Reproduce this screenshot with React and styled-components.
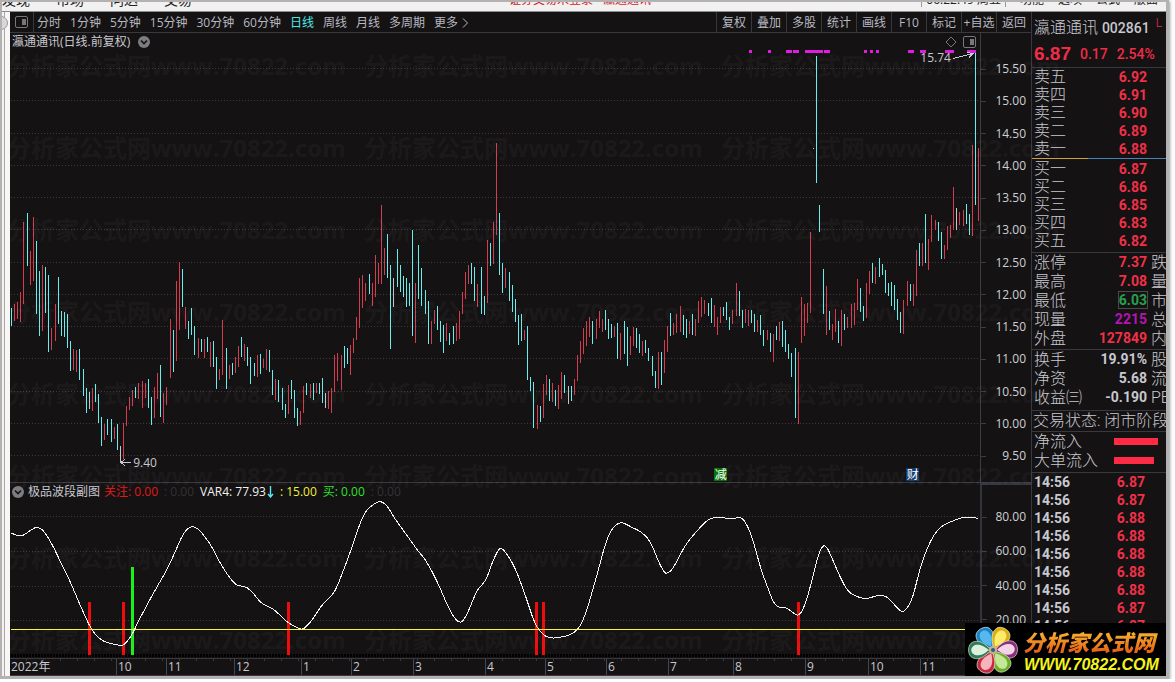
import styled, { createGlobalStyle } from "styled-components";

const periods = ["分时", "1分钟", "5分钟", "15分钟", "30分钟", "60分钟", "日线", "周线", "月线", "多周期"];
const tools = ["复权", "叠加", "多股", "统计", "画线", "F10", "标记", "+自选", "返回"];

const prices = ["15.50", "15.00", "14.50", "14.00", "13.50", "13.00", "12.50", "12.00", "11.50", "11.00", "10.50", "10.00", "9.50"];
const levels = ["80.00", "60.00", "40.00", "20.00"];

const months = [
  ["2022年", 106], ["10", 50], ["11", 68], ["12", 67], ["1", 50], ["2", 62], ["3", 72], ["4", 60],
  ["5", 61], ["6", 62], ["7", 65], ["8", 72], ["9", 63], ["10", 52], ["11", 111]
];

const asks = [["卖五", "6.92"], ["卖四", "6.91"], ["卖三", "6.90"], ["卖二", "6.89"], ["卖一", "6.88"]];
const bids = [["买一", "6.87"], ["买二", "6.86"], ["买三", "6.85"], ["买四", "6.83"], ["买五", "6.82"]];
const limits = [
  ["涨停", "7.37", "跌", "up"],
  ["最高", "7.08", "量", "up"],
  ["最低", "6.03", "市", "down"],
  ["现量", "2215", "总", "volume"],
  ["外盘", "127849", "内", "up"]
];
const basics = [
  ["换手", "19.91%", "股", "plain"],
  ["净资", "5.68", "流", "plain"],
  ["收益㈢", "-0.190", "PE", "plain"]
];
const deals = ["6.87", "6.87", "6.88", "6.88", "6.88", "6.88", "6.88", "6.87", "6.87"];

// direction (u = up, d = down, w = flat), high, low
const bars = `
d308-326 u304-321 u302-319 u292-322 u222-304 d213-266 u251-285 u217-281 d241-314 d271-336
u265-331 d267-313 d275-352 u328-350 u304-341 d277-324 d311-336 d312-337 d314-348 d341-371
u349-370 u350-372 d349-380 d369-396 d388-413 w392-409 u388-411 d384-402 d394-423 d417-446
u424-440 d419-435 d419-442 u427-439 d424-450 w446-463 u423-459 u406-426 u397-410 u390-406
d387-398 u383-399 u381-408 u383-398 d379-408 d397-425 u387-418 u373-399 d365-417 u393-423
u387-405 u319-378 d330-372 u281-361 u262-330 d269-307 u307-329 d321-339 d308-335 d326-355
u338-358 d339-352 u339-358 d337-352 u342-367 d341-367 d357-389 u369-380 u320-375 d348-389
u365-379 d363-375 u357-373 u346-367 d337-357 u344-361 d347-366 d357-384 d363-376 u355-377
d354-374 u359-368 u349-370 d350-372 d370-395 u379-400 d380-402 d388-410 d404-418 u385-414
d380-399 d390-418 d408-426 u411-425 u386-413 d383-395 u384-398 d383-400 u383-393 d383-394
d378-403 w393-408 u391-409 u388-413 u355-392 u353-381 u355-390 d346-368 d348-364 u345-375
u338-353 u317-340 u278-328 u275-308 u283-301 d274-294 u283-306 u255-297 u263-284 u205-284
u248-275 d234-278 d265-349 w278-307 d249-287 d265-292 d276-297 d278-307 d283-306 d230-336
u283-343 d245-299 d268-306 d290-314 d301-344 u321-344 u310-324 d306-330 d321-342 d325-353
u323-341 d333-345 d326-344 u323-341 u311-339 u292-314 u272-299 u265-284 d263-284 d267-301
u284-307 d267-314 d296-315 u240-303 d243-266 u222-264 u143-235 d213-275 d263-293 u268-288
d272-301 d285-312 d299-322 d315-345 d314-341 u330-340 d326-380 d377-391 d382-428 u405-429
d406-422 u384-418 u375-395 d379-401 u383-402 d390-406 u385-409 u372-399 d375-393 w386-404
d386-401 u379-395 u355-381 u341-363 u328-354 u321-346 u317-337 d321-344 u319-339 u311-328
u319-332 d310-330 d319-339 d324-338 u326-337 d323-359 u333-360 d321-354 d327-366 u336-355
u327-346 d328-348 d334-353 u341-356 d340-353 d348-361 d356-376 d371-388 u352-389 d352-385
u340-373 u326-352 d313-336 u323-335 u314-333 u306-332 d315-335 d319-338 u321-334 d314-335
u319-336 u301-323 u297-317 u300-314 d303-316 d298-323 u305-327 u317-335 u307-323 d307-316
d302-320 d317-330 u310-324 u283-316 d291-316 d310-328 u309-323 u310-326 d310-323 d314-332
u320-332 d315-335 d330-346 u330-340 d333-352 u334-362 d326-340 u322-341 d321-347 d330-352
d344-359 d353-377 d348-418 u352-424 u297-343 u304-336 u303-323 u232-313 w148-149 d56-183
d205-232 d269-314 u286-335 d311-330 u324-340 u309-332 d321-343 u310-346 d314-330 u317-328
u304-328 u303-325 u279-310 d288-312 d306-321 u283-318 u271-294 d263-283 u267-284 d258-277
d264-275 d270-293 d283-296 d282-306 d285-310 d299-320 d312-333 u300-334 u281-306 d284-301
u284-306 u250-296 d243-266 u243-266 d214-263 u239-270 u215-242 u220-230 d222-241 d232-259
u245-259 u226-250 u225-238 u187-230 w208-230 u212-225 u210-226 d204-224 d214-235 u145-236
d53-205 u148-221
`.trim().split(/\s+/).map((item, i) => {
  const [high, low] = item.slice(1).split("-").map(Number);
  return { x: Math.floor(11.5 + i * 3.1095), high, low, dir: item[0] };
});

const barColors = { u: "#d63c50", d: "#68eeec", w: "#c4c4cc" };

const signals = [
  [749, 3], [768, 3], [786, 6], [793, 6], [805, 18], [824, 6], [864, 3], [870, 3], [876, 3],
  [908, 6], [920, 6], [945, 9], [967, 9]
];

const wave = [
  [11, 533], [20, 537], [27, 533], [35, 527], [41, 528], [46, 534], [53, 546], [62, 565], [70, 581],
  [80, 605], [90, 627], [95, 634], [100, 639], [107, 643], [114, 644], [122, 646], [127, 642],
  [133, 633], [137, 624], [148, 603], [158, 585], [168, 568], [175, 552], [182, 536], [187, 529],
  [192, 526], [199, 529], [204, 536], [211, 545], [220, 563], [229, 577], [236, 585], [241, 586],
  [247, 587], [254, 594], [260, 602], [266, 606], [272, 608], [280, 615], [288, 623], [296, 627],
  [302, 630], [307, 626], [313, 619], [321, 606], [328, 599], [335, 592], [344, 569], [351, 550],
  [359, 526], [365, 512], [371, 506], [379, 501], [384, 503], [388, 507], [395, 519], [403, 530],
  [411, 541], [418, 551], [425, 559], [433, 573], [441, 590], [448, 607], [455, 619], [460, 623],
  [464, 620], [469, 610], [477, 590], [482, 585], [487, 578], [492, 563], [498, 550], [501, 548],
  [505, 551], [515, 567], [526, 597], [534, 622], [541, 633], [548, 638], [559, 638], [576, 633],
  [585, 617], [597, 575], [606, 541], [613, 527], [620, 522], [626, 524], [633, 528], [640, 531],
  [650, 540], [659, 563], [664, 572], [667, 574], [673, 569], [682, 551], [689, 540], [704, 523],
  [711, 518], [718, 517], [732, 519], [740, 517], [745, 521], [752, 536], [761, 570], [768, 588],
  [773, 602], [779, 608], [785, 607], [790, 610], [798, 617], [804, 608], [811, 585], [818, 555],
  [823, 545], [827, 547], [832, 558], [840, 577], [848, 592], [857, 597], [867, 599], [875, 596],
  [882, 595], [889, 598], [897, 608], [902, 612], [906, 610], [913, 598], [920, 567], [931, 539],
  [940, 527], [950, 522], [960, 518], [966, 517], [970, 518], [974, 517], [978, 519]
];

const smooth = (points) => {
  let d = `M${points[0].join(" ")}`;
  for (let i = 1; i < points.length - 1; i++) {
    const [x, y] = points[i];
    const [nx, ny] = points[i + 1];
    d += ` Q${x} ${y} ${(x + nx) / 2} ${(y + ny) / 2}`;
  }
  return `${d} L${points[points.length - 1].join(" ")}`;
};

const Collapse = () => (
  <svg width="12" height="12" viewBox="0 0 12 12">
    <circle cx="6" cy="6" r="6" fill="#7d7d80" />
    <path d="M3 4.5 6 7.5 9 4.5" fill="none" stroke="#141213" strokeWidth="1.6" />
  </svg>
);

const SplitIcon = () => (
  <svg width="13" height="12" viewBox="0 0 13 12">
    <rect x=".5" y=".5" width="12" height="11" rx="1.5" fill="none" stroke="#77777a" />
    <rect x="7" y="3" width="4" height="6" fill="#77777a" />
  </svg>
);

const PriceChart = () => (
  <Plot viewBox="10 50 970 432" preserveAspectRatio="none" shapeRendering="crispEdges">
    {prices.map((price, i) => (
      <line
        key={price}
        x1="11" x2="980"
        y1={Math.round(68 + i * 32.25) + 0.5} y2={Math.round(68 + i * 32.25) + 0.5}
        stroke="#3b3a3c" strokeDasharray="1 2"
      />
    ))}
    {bars.map(({ x, high, low, dir }) => (
      <rect key={x} x={x} y={high} width="1" height={low - high} fill={barColors[dir]} />
    ))}
    {signals.map(([x, width]) => (
      <rect key={x} x={x} y="50" width={width} height="3" fill="#e01ce0" />
    ))}
    <path
      d="M953 58.5 973 53.5M967 52.5 973 53.5 969 57.5M131 462.5H120M125 459.5 121 462.5 125 465.5"
      fill="none" stroke="#c8c8d0"
    />
  </Plot>
);

const WaveChart = () => (
  <Plot viewBox="10 500 970 158" preserveAspectRatio="none" shapeRendering="crispEdges">
    {[516, 551, 586, 620].map((y) => (
      <line key={y} x1="11" x2="980" y1={y + 0.5} y2={y + 0.5} stroke="#3b3a3c" strokeDasharray="1 2" />
    ))}
    <line x1="11" x2="980" y1="655.5" y2="655.5" stroke="#000" strokeWidth="3" strokeDasharray="2 1" />
    {[88, 122, 287, 535, 542, 797].map((x) => (
      <rect key={x} x={x} y="602" width="3" height="53" fill="#ee0c0c" />
    ))}
    <rect x="131" y="567" width="3" height="88" fill="#1cf01c" />
    <path d={smooth(wave)} fill="none" stroke="#f4f4f4" />
    <line x1="11" x2="980" y1="629.5" y2="629.5" stroke="#f4f43c" />
  </Plot>
);

const Petal = ({ angle, outer, inner }) => (
  <g transform={`rotate(${angle} 28 27)`}>
    <path d="M28 25C20 18 18 12 20 7 22 1 34 1 36 7 38 12 36 18 28 25Z" fill={outer} stroke="#f4f0d8" strokeWidth=".6" />
    <path d="M28 23C23 17 22 13 23 9 25 4 31 4 33 9 34 13 33 17 28 23Z" fill={inner} />
  </g>
);

const QuoteRows = ({ rows }) => (
  <Quotes>
    <tbody>
      {rows.map(([label, value, side, tone = "up"]) => (
        <QuoteRow key={label} $tall={Boolean(side)}>
          <th scope="row">{label}</th>
          <Value $tone={tone}><span>{value}</span></Value>
          <Side>{side}</Side>
        </QuoteRow>
      ))}
    </tbody>
  </Quotes>
);

const SiteLogo = () => (
  <Logo>
    <svg width="56" height="53" viewBox="0 0 56 53">
      <Petal angle={-30} outer="#1684c8" inner="#58b8ee" />
      <Petal angle={30} outer="#dcae10" inner="#fbec6c" />
      <Petal angle={88} outer="#8b2b84" inner="#f3d4e4" />
      <Petal angle={146} outer="#6cae2c" inner="#c4e898" />
      <Petal angle={206} outer="#c82840" inner="#f6b4bc" />
      <Petal angle={270} outer="#2f7c5c" inner="#dcf0dc" />
      <circle cx="28" cy="27" r="4" fill="#c8b088" />
      <circle cx="28" cy="27" r="2" fill="#2c5c84" />
    </svg>
    <div>
      <LogoName>分析家公式网</LogoName>
      <LogoSite>WWW.70822.COM</LogoSite>
    </div>
  </Logo>
);

export default function App() {
  return (
    <Window>
      <GlobalStyle />
      <MenuBar>
        <MenuGroup>
          <a href="#discover">发现</a>
          <a href="#market">市场</a>
          <a href="#ask">问达</a>
          <a href="#trade">交易</a>
        </MenuGroup>
        <Notice><span>证券交易未登录</span><span>瀛通通讯</span></Notice>
        <MenuRight>
          <Clock>06:22:49 周五</Clock>
          <a href="#features">功能</a>
          <a href="#options">选项</a>
          <a href="#formula">公式</a>
          <a href="#layout">版面</a>
        </MenuRight>
      </MenuBar>
      <Body>
        <Dock><button aria-label="展开" /></Dock>
        <Main>
          <Toolbar>
            <IconButton aria-label="分栏"><SplitIcon /></IconButton>
            <Periods>
              {periods.map((name) => (
                <Period key={name} $active={name === "日线"}>{name}</Period>
              ))}
              <Period>
                更多
                <svg width="7" height="10" viewBox="0 0 7 10">
                  <path d="M1 .5 5.5 5 1 9.5" fill="none" stroke="#b8b8c0" />
                </svg>
              </Period>
            </Periods>
            <Tools>
              {tools.map((name) => <Tool key={name}>{name}</Tool>)}
            </Tools>
          </Toolbar>
          <Pane $grow>
            <PlotColumn>
              <ChartTitle>
                瀛通通讯(日线.前复权)
                <Collapse />
                <TitleIcons>
                  <svg width="12" height="12" viewBox="0 0 12 12">
                    <path d="M6 1 11 6 6 11 1 6Z" fill="none" stroke="#77777a" />
                  </svg>
                  <SplitIcon />
                </TitleIcons>
              </ChartTitle>
              <PlotBox>
                <PriceChart />
                <HighLabel>15.74</HighLabel>
                <LowLabel>9.40</LowLabel>
                <EventTag $left="72.6%" $color="#087408">减</EventTag>
                <EventTag $left="92.4%" $color="#103c6c">财</EventTag>
              </PlotBox>
            </PlotColumn>
            <PriceScale>
              {prices.map((price) => <span key={price}>{price}</span>)}
            </PriceScale>
          </Pane>
          <Pane>
            <PlotColumn>
              <WaveTitle>
                <Collapse />
                <span>极品波段副图</span>
                <Reading $color="#e01818">关注: 0.00</Reading>
                <Reading $color="#333234">: 0.00</Reading>
                <Reading $color="#f0f0f0">
                  VAR4: 77.93
                  <svg width="7" height="12" viewBox="0 0 7 12">
                    <path d="M3.5 0V11M1 8 3.5 11 6 8" fill="none" stroke="#5ce8f0" strokeWidth="1.4" />
                  </svg>
                </Reading>
                <Reading $color="#f0f03c">: 15.00</Reading>
                <Reading $color="#30e030">买: 0.00</Reading>
                <Reading $color="#333234">: 0.00</Reading>
              </WaveTitle>
              <PlotBox><WaveChart /></PlotBox>
            </PlotColumn>
            <LevelScale>
              {levels.map((level) => <span key={level}>{level}</span>)}
            </LevelScale>
          </Pane>
          <TimeAxis>
            {months.map(([name], i) => <span key={i}>{name}</span>)}
          </TimeAxis>
        </Main>
        <Aside>
          <StockHead>
            <StockName>瀛通通讯 <b>002861</b><sup>L</sup></StockName>
            <StockPrice><strong>6.87</strong><span>0.17</span><span>2.54%</span></StockPrice>
          </StockHead>
          <QuoteRows rows={asks} />
          <Balance />
          <QuoteRows rows={bids} />
          <Rule $gap="2px" />
          <QuoteRows rows={limits} />
          <Rule $gap="1px" />
          <QuoteRows rows={basics} />
          <Rule $gap="3px" />
          <Status>交易状态: 闭市阶段</Status>
          <Rule $gap="1px" />
          <Flow><span>净流入</span><FlowBar $width="44px" /></Flow>
          <Flow><span>大单流入</span><FlowBar $width="40px" /></Flow>
          <Rule $gap="2px" />
          <Deals>
            <table>
              <tbody>
                {deals.map((price, i) => (
                  <tr key={i}><td>14:56</td><td>{price}</td></tr>
                ))}
              </tbody>
            </table>
          </Deals>
        </Aside>
        <Watermark aria-hidden="true">
          {Array.from({ length: 24 }, (_, i) => (
            <span key={i}>分析家公式网www.70822.com</span>
          ))}
        </Watermark>
        <SiteLogo />
      </Body>
    </Window>
  );
}

const GlobalStyle = createGlobalStyle`
  * {
    box-sizing: border-box;
  }
  body {
    margin: 0;
    background: #fff;
    color: #c8c8d0;
    font-family: "Open Sans", "Noto Sans CJK SC", sans-serif;
    font-size: 12px;
    line-height: 16px;
  }
  button {
    padding: 0;
    border: 0;
    background: none;
    color: inherit;
    font: inherit;
    cursor: pointer;
  }
  a {
    color: inherit;
    text-decoration: none;
  }
  svg {
    display: block;
    flex: none;
  }
`

const Window = styled.div`
  display: flex;
  flex-direction: column;
  min-height: calc(100vh - 3px);
  margin-right: 6px;
  border: solid #b4b1b2;
  border-width: 2px 3px 3px 2px;
  box-shadow: 1px 1px 3px #999;
`

const MenuBar = styled.div`
  display: flex;
  justify-content: space-between;
  align-items: flex-end;
  height: 10px;
  padding-bottom: 4px;
  overflow: hidden;
  background: #f1f1f1;
  border-bottom: 1px solid #8c8c8c;
  color: #222;
  line-height: 14px;
  white-space: nowrap;
`

const MenuGroup = styled.div`
  display: flex;
  flex: 1;
  gap: 26px;
  font-size: 14px;
`

const Notice = styled.div`
  display: flex;
  gap: 10px;
  color: #d01c1c;
`

const MenuRight = styled.div`
  display: flex;
  flex: 1;
  justify-content: flex-end;
  align-items: flex-end;
  gap: 14px;
  padding-right: 8px;
`

const Clock = styled.span`
  padding: 0 4px;
  border: solid #9a9aa4;
  border-width: 0 1px;
`

const Body = styled.div`
  position: relative;
  display: flex;
  flex: 1;
  background: #141213;
  overflow: hidden;
`

const Dock = styled.div`
  width: 8px;
  padding-top: 4px;
  overflow: hidden;
  background: linear-gradient(to right, #f4f3f2 2px, #a8a6a6 2px, #a8a6a6 3px, #f8f7f5 3px);
  button {
    display: block;
    width: 14px;
    height: 14px;
    margin-left: -8px;
    border: 1px solid #999;
    border-radius: 50%;
    background: #d8d8d8;
  }
`

const Main = styled.div`
  display: flex;
  flex: 1;
  flex-direction: column;
  min-width: 0;
`

const Toolbar = styled.div`
  display: flex;
  height: 21px;
  border-bottom: 1px solid #38383e;
  white-space: nowrap;
`

const IconButton = styled.button`
  width: 24px;
  padding-left: 5px;
  border-right: 1px solid #38383e;
`

const Periods = styled.div`
  display: flex;
  flex: 1;
  gap: 9px;
  padding-left: 3px;
`

const Period = styled.button`
  display: flex;
  align-items: center;
  gap: 4px;
  padding-top: 1px;
  color: ${({ $active }) => $active ? "#4fe6e6" : "#b8b8c0"};
`

const Tools = styled.div`
  display: flex;
`

const Tool = styled.button`
  width: 35px;
  padding-top: 1px;
  border-left: 1px solid #38383e;
  color: #b8b8c0;
`

const Pane = styled.div`
  display: flex;
  flex: ${({ $grow }) => $grow ? "1 0 440px" : "0 0 176px"};
  border-bottom: 1px solid #38383e;
`

const PlotColumn = styled.div`
  display: flex;
  flex: 1;
  flex-direction: column;
  min-width: 0;
`

const ChartTitle = styled.div`
  display: flex;
  align-items: center;
  gap: 8px;
  height: 17px;
  padding: 1px 4px 0 2px;
`

const TitleIcons = styled.div`
  display: flex;
  gap: 6px;
  margin-left: auto;
`

const WaveTitle = styled.div`
  display: flex;
  align-items: center;
  gap: 4px;
  height: 17px;
  padding-left: 2px;
  white-space: nowrap;
`

const Reading = styled.span`
  display: flex;
  align-items: center;
  gap: 1px;
  padding-right: 2px;
  color: ${({ $color }) => $color};
`

const PlotBox = styled.div`
  position: relative;
  display: flex;
  flex: 1;
`

const Plot = styled.svg`
  position: absolute;
  width: 100%;
  height: 100%;
`

const HighLabel = styled.span`
  position: absolute;
  top: 0;
  right: 3%;
`

const LowLabel = styled.span`
  position: absolute;
  bottom: 11px;
  left: 12.7%;
`

const EventTag = styled.span`
  position: absolute;
  bottom: 1px;
  left: ${({ $left }) => $left};
  width: 13px;
  background: ${({ $color }) => $color};
  color: #fff;
  line-height: 13px;
  text-align: center;
`

const Scale = styled.div`
  display: flex;
  flex-direction: column;
  justify-content: space-between;
  width: 51px;
  border-left: 1px solid #3c3c42;
  color: #d0d0d4;
  span {
    display: flex;
    align-items: center;
    justify-content: space-between;
    padding-right: 5px;
  }
  span::before {
    width: 5px;
    height: 1px;
    background: #3c3c42;
    content: "";
  }
`

const PriceScale = styled(Scale)`
  padding: 28px 0 18px;
`

const LevelScale = styled(Scale)`
  padding: 24px 0 30px;
  border-top: 2px solid #30353d;
  border-left: 2px solid #30353d;
`

const TimeAxis = styled.div`
  display: grid;
  grid-template-columns: ${months.map(([, size]) => `${size}fr`).join(" ")};
  height: 17px;
  border-bottom: 1px solid #38383e;
  background: repeating-linear-gradient(to right, transparent 0 16px, #38383e 16px 17px) 0 0 / 100% 2px no-repeat;
  span {
    padding-left: 1px;
    border-left: 1px solid #46464c;
  }
  span:first-child {
    border-left: 0;
  }
`

const Aside = styled.aside`
  display: flex;
  flex-direction: column;
  width: 135px;
  overflow: hidden;
  border-left: 1px solid #38383e;
  font-family: Roboto, "Noto Sans CJK SC", sans-serif;
  font-size: 16px;
  font-weight: 300;
  white-space: nowrap;
`

const StockHead = styled.div`
  height: 56px;
  padding: 5px 0 0 2px;
  border-bottom: 1px solid #38383e;
`

const StockName = styled.div`
  line-height: 20px;
  b {
    font-size: 14px;
    font-weight: 500;
  }
  sup {
    margin-left: 6px;
    color: #e83048;
    font-size: 12px;
    line-height: 12px;
  }
`

const StockPrice = styled.div`
  display: flex;
  align-items: center;
  gap: 9px;
  color: #f02c46;
  font-size: 14px;
  font-weight: 500;
  line-height: 32px;
  strong {
    font-family: "Liberation Sans", sans-serif;
    font-size: 19px;
  }
`

const Quotes = styled.table`
  width: 100%;
  border-collapse: collapse;
  table-layout: fixed;
`

const QuoteRow = styled.tr`
  line-height: ${({ $tall }) => $tall ? "19px" : "18px"};
  th {
    width: 52px;
    padding: 0 0 0 2px;
    font-weight: 300;
    text-align: left;
  }
`

const tones = { up: "#f03048", down: "#28a04c", volume: "#b414b4", plain: "#c8c8d0" };

const Value = styled.td`
  padding: 0;
  color: ${({ $tone }) => tones[$tone]};
  font-size: 14px;
  font-weight: 700;
  text-align: right;
  span {
    outline: ${({ $tone }) => $tone === "down" ? "1px solid #4a4a4a" : "0"};
  }
`

const Side = styled.td`
  width: 19px;
  padding: 0 0 0 4px;
`

const Balance = styled.div`
  height: 1px;
  margin-bottom: 1px;
  background: linear-gradient(to right, #d0a040 42%, #4484b8 42%);
`

const Rule = styled.div`
  flex: none;
  height: 1px;
  margin-top: ${({ $gap }) => $gap};
  background: #38383e;
`

const Status = styled.div`
  padding-left: 1px;
  line-height: 19px;
`

const Flow = styled.div`
  display: grid;
  grid-template-columns: 80px 1fr;
  align-items: center;
  padding-left: 2px;
  line-height: 19px;
`

const FlowBar = styled.div`
  width: ${({ $width }) => $width};
  height: 7px;
  background: #ff2a45;
`

const Deals = styled.div`
  flex: 1 1 0;
  min-height: 0;
  overflow: hidden;
  table {
    width: 100%;
    border-collapse: collapse;
  }
  td {
    padding: 0 0 0 2px;
    font-size: 14px;
    font-weight: 700;
    line-height: 18px;
  }
  td + td {
    padding: 0 21px 0 0;
    color: #f03048;
    text-align: right;
  }
`

const Watermark = styled.div`
  position: absolute;
  inset: 38px 0 0 5px;
  display: grid;
  grid-template-columns: repeat(3, 357px);
  grid-auto-rows: 82px;
  overflow: hidden;
  color: rgba(255, 255, 255, 0.05);
  font-size: 24px;
  font-weight: 700;
  line-height: 32px;
  white-space: nowrap;
  pointer-events: none;
`

const Logo = styled.div`
  position: absolute;
  right: 0;
  bottom: 0;
  display: flex;
  align-items: center;
  width: 201px;
  height: 53px;
  overflow: hidden;
  background: #000;
  font-style: italic;
  font-weight: 700;
  white-space: nowrap;
`

const LogoName = styled.div`
  padding-left: 2px;
  background: linear-gradient(#f8b430 20%, #e86818 80%);
  background-clip: text;
  color: transparent;
  font-family: "Noto Sans CJK SC", sans-serif;
  font-size: 22px;
  font-weight: 900;
  line-height: 30px;
`

const LogoSite = styled.div`
  padding-left: 3px;
  color: #f4f41c;
  font-family: "Liberation Sans", sans-serif;
  font-size: 16px;
  line-height: 18px;
`
